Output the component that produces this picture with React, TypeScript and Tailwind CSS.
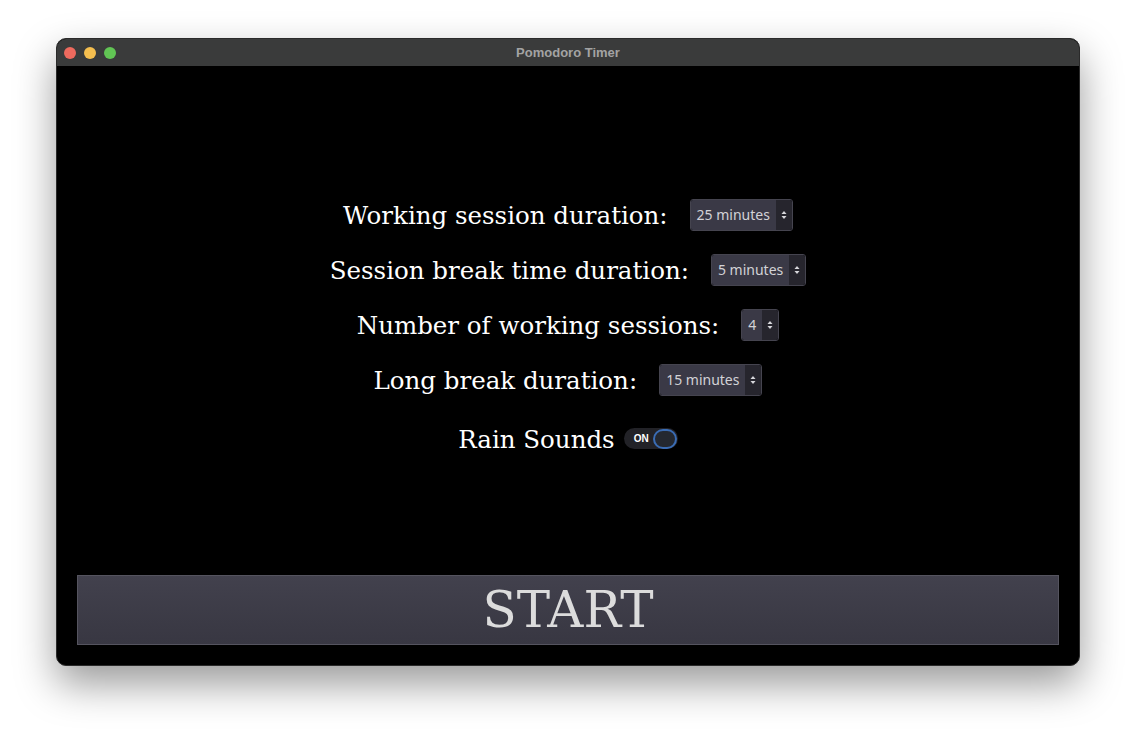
const serif = { fontFamily: '"DejaVu Serif", "Liberation Serif", serif' };

function Stepper({ value }: { value: string }) {
  return (
    <div className="flex h-[32px] overflow-hidden rounded-[3px] border border-[#45444f]">
      <div className="flex items-center bg-[#3a3946] pl-[6px] pr-[6px] font-['Noto_Sans',sans-serif] text-[14px] text-[#d2d2d6]">
        {value}
      </div>
      <div className="flex w-[16px] items-center justify-center bg-[#26252d]">
        <svg width="6" height="10" viewBox="0 0 6 10">
          <path d="M3 1 L5.5 4 L0.5 4 Z" fill="#d8d8dc" />
          <path d="M3 9 L5.5 6 L0.5 6 Z" fill="#d8d8dc" />
        </svg>
      </div>
    </div>
  );
}

function Row({ label, value }: { label: string; value: string }) {
  return (
    <div className="flex h-[55px] items-center justify-center gap-[22px]">
      <span className="pt-[3px] text-[24.5px] text-white" style={serif}>
        {label}
      </span>
      <Stepper value={value} />
    </div>
  );
}

export default function App() {
  return (
    <div className="h-[740px] w-[1136px] bg-white pl-[56px] pt-[38px]">
      <div className="flex h-[628px] w-[1024px] flex-col overflow-hidden rounded-[10px] border border-[#2a2a2a] bg-black shadow-[0_18px_40px_rgba(0,0,0,0.4)]">
        {/* title bar */}
        <div className="relative flex h-[27px] shrink-0 items-center bg-[#3a3b3b]">
          <div className="flex gap-[8px] pl-[7px]">
            <div className="h-[12px] w-[12px] rounded-full bg-[#ee6a5e]" />
            <div className="h-[12px] w-[12px] rounded-full bg-[#f5bf4f]" />
            <div className="h-[12px] w-[12px] rounded-full bg-[#61c554]" />
          </div>
          <div className="absolute inset-0 flex items-center justify-center font-['Liberation_Sans',sans-serif] text-[13px] font-bold text-[#a3a3a3]">
            Pomodoro Timer
          </div>
        </div>

        <div className="flex flex-1 flex-col">
          <div className="flex flex-col pt-[121px]">
            <Row label="Working session duration:" value="25 minutes" />
            <Row label="Session break time duration:" value="5 minutes" />
            <Row label="Number of working sessions:" value="4" />
            <Row label="Long break duration:" value="15 minutes" />
            <div className="mt-[4px] flex h-[55px] items-center justify-center gap-[9px]">
              <span className="pt-[3px] text-[24.5px] text-white" style={serif}>
                Rain Sounds
              </span>
              <div className="flex h-[21px] w-[54px] items-center justify-between rounded-full bg-[#222227] pl-[10px] pr-[1px]">
                <span className="font-['Liberation_Sans',sans-serif] text-[10px] font-bold text-white">ON</span>
                <div className="h-[20px] w-[24px] rounded-full border-2 border-[#3a6cb4] bg-[#242830]" />
              </div>
            </div>
          </div>

          <div className="mt-auto px-[20px] pb-[20px]">
            <button className="flex h-[70px] w-full items-center justify-center border border-[#55545f] bg-gradient-to-b from-[#42414d] to-[#383742] text-[50px] text-[#dcdcdc]" style={serif}>
              START
            </button>
          </div>
        </div>
      </div>
    </div>
  );
}
